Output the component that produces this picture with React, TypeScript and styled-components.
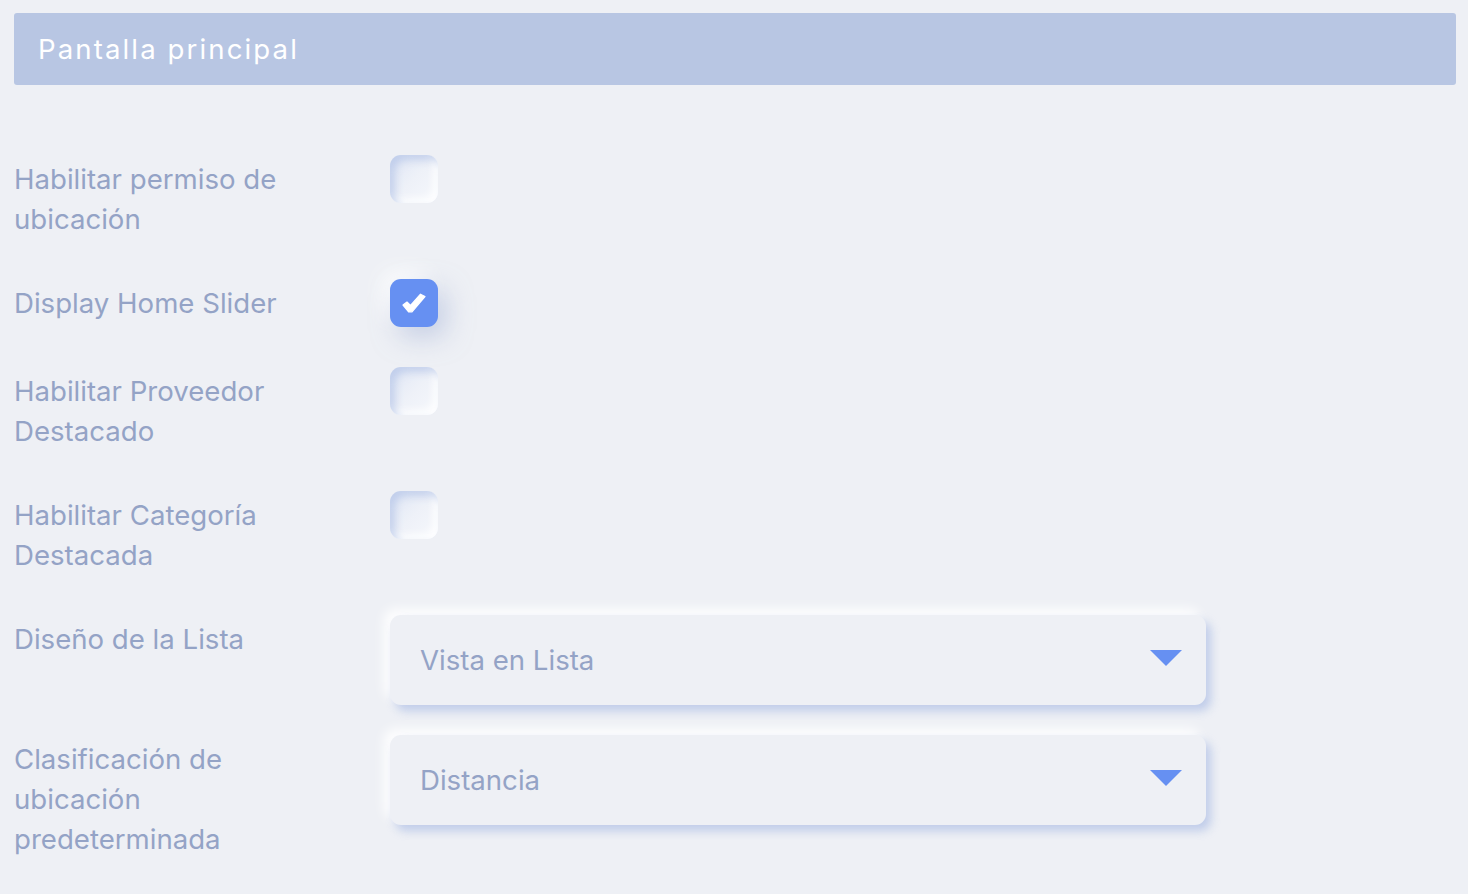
import React from "react";
import styled, { createGlobalStyle } from "styled-components";

const Global = createGlobalStyle`
  html, body { margin: 0; padding: 0; background: #eef0f5; }
  body { font-family: Inter, "Noto Sans", sans-serif; }
`;

const Page = styled.div`
  padding: 13px 12px 0 14px;
  min-height: 894px;
  box-sizing: border-box;
  background: #eef0f5;
`;

const Header = styled.div`
  height: 72px;
  background: #b8c6e3;
  border-radius: 3px;
  display: flex;
  align-items: center;
  padding-left: 24px;
  color: #ffffff;
  font-size: 27.6px;
  letter-spacing: 2.1px;
  font-weight: 400;
`;

const Form = styled.div`
  display: flex;
  flex-direction: column;
  padding-top: 70px;
`;

const Row = styled.div<{ $mb: number }>`
  display: flex;
  align-items: flex-start;
  margin-bottom: ${(p) => p.$mb}px;
`;

const Label = styled.div`
  width: 376px;
  padding-right: 90px;
  box-sizing: border-box;
  padding-top: 4px;
  font-size: 27.6px;
  line-height: 40px;
  color: #94a3c6;
  flex-shrink: 0;
`;

const Check = styled.div<{ $on?: boolean }>`
  width: 48px;
  height: 48px;
  border-radius: 11px;
  box-sizing: border-box;
  display: flex;
  align-items: center;
  justify-content: center;
  background: ${(p) =>
    p.$on ? "#6690f2" : "linear-gradient(135deg, #dfe6f5 0%, #eef1f8 50%, #f6f8fc 100%)"};
  box-shadow: ${(p) =>
    p.$on
      ? "8px 10px 26px rgba(160,176,214,0.5), -8px -8px 20px rgba(255,255,255,0.9)"
      : "inset 5px 5px 8px rgba(170,188,228,0.6), inset -4px -4px 8px rgba(255,255,255,1)"};
`;

const Tick = styled.svg`
  width: 24px;
  height: 20px;
  display: block;
  margin-left: -1px;
`;

const Select = styled.div`
  width: 816px;
  height: 90px;
  border-radius: 11px;
  background: #eef0f5;
  display: flex;
  align-items: center;
  justify-content: space-between;
  padding: 0 24px 0 30px;
  box-sizing: border-box;
  font-size: 27.6px;
  color: #94a3c6;
  box-shadow: 5px 6px 10px rgba(176,192,230,0.75), -6px -6px 12px rgba(255,255,255,0.95);
`;

const Caret = styled.svg`
  width: 32px;
  height: 17px;
  display: block;
  margin-top: -4px;
`;

const Arrow = () => (
  <Caret viewBox="0 0 32 17">
    <polygon points="0,0 32,0 16,16" fill="#6690f2" />
  </Caret>
);

const CheckMark = () => (
  <Tick viewBox="0 0 24 20">
    <polygon
      points="1,12 5,9 8.5,12.5 18.5,1.2 23,3.5 10,18.8 6.8,19"
      fill="#ffffff"
      stroke="#ffffff"
      strokeWidth="1.2"
      strokeLinejoin="round"
    />
  </Tick>
);

export default function App() {
  return (
    <>
      <Global />
      <Page>
        <Header>Pantalla principal</Header>
        <Form>
          <Row $mb={40}>
            <Label>Habilitar permiso de ubicación</Label>
            <Check />
          </Row>
          <Row $mb={40}>
            <Label>Display Home Slider</Label>
            <Check $on>
              <CheckMark />
            </Check>
          </Row>
          <Row $mb={40}>
            <Label>Habilitar Proveedor Destacado</Label>
            <Check />
          </Row>
          <Row $mb={40}>
            <Label>Habilitar Categoría Destacada</Label>
            <Check />
          </Row>
          <Row $mb={30}>
            <Label>Diseño de la Lista</Label>
            <Select>
              <span>Vista en Lista</span>
              <Arrow />
            </Select>
          </Row>
          <Row $mb={0}>
            <Label>Clasificación de ubicación predeterminada</Label>
            <Select>
              <span>Distancia</span>
              <Arrow />
            </Select>
          </Row>
        </Form>
      </Page>
    </>
  );
}
